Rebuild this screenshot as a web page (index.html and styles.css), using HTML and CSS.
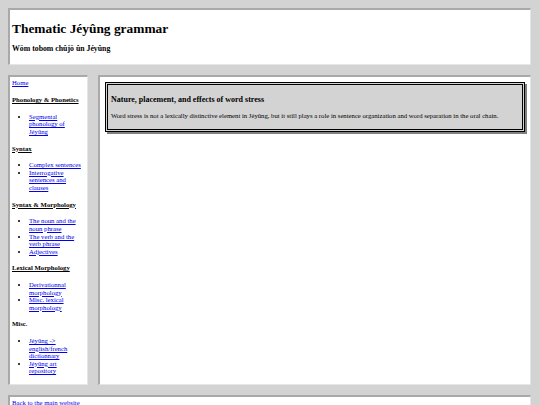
FILE: index.html
```html
<!DOCTYPE html>
<html>
<head>
<meta charset="utf-8">
<title>Thematic Jéyûng grammar</title>
<link rel="stylesheet" href="styles.css">
</head>
<body>
<div class="header panel">
  <h1 class="title">Thematic Jéyûng grammar</h1>
  <h4 class="subtitle">Wöm tobom chûjö ûn Jéyûng</h4>
</div>
<div class="row">
  <div class="sidebar panel">
    <p class="nav-home"><a href="#">Home</a></p>
    <h4 class="nav-head u">Phonology &amp; Phonetics</h4>
    <ul class="nav-list">
      <li><a href="#">Segmental phonology of Jéyûng</a></li>
    </ul>
    <h4 class="nav-head u">Syntax</h4>
    <ul class="nav-list">
      <li><a href="#">Complex sentences</a></li>
      <li><a href="#">Interrogative sentences and clauses</a></li>
    </ul>
    <h4 class="nav-head u">Syntax &amp; Morphology</h4>
    <ul class="nav-list">
      <li><a href="#">The noun and the noun phrase</a></li>
      <li><a href="#">The verb and the verb phrase</a></li>
      <li><a href="#">Adjectives</a></li>
    </ul>
    <h4 class="nav-head u">Lexical Morphology</h4>
    <ul class="nav-list">
      <li><a href="#">Derivationnal morphology</a></li>
      <li><a href="#">Misc. lexical morphology</a></li>
    </ul>
    <h4 class="nav-head">Misc.</h4>
    <ul class="nav-list">
      <li><a href="#">Jéyûng -&gt; english/french dictionnary</a></li>
      <li><a href="#">Jéyûng art repository</a></li>
    </ul>
  </div>
  <div class="main panel">
    <div class="article">
      <h3 class="article-title">Nature, placement, and effects of word stress</h3>
      <p class="article-text">Word stress is not a lexically distinctive element in Jéyûng, but it still plays a role in sentence organization and word separation in the oral chain.</p>
    </div>
  </div>
</div>
<div class="footer panel">
  <a href="#">Back to the main website</a>
</div>
</body>
</html>
```
FILE: styles.css
```css
html, body {
  background: #d3d3d3;
}
body {
  margin: 8px 9px 0 8px;
  font-family: "Liberation Serif", "Times New Roman", serif;
  font-size: 6.7px;
  line-height: 1.15;
  color: #000;
}
a {
  color: #0000ee;
  text-decoration: underline;
}
.panel {
  background: #fff;
  border-style: solid;
  border-width: 2px 1px 1px 2px;
  border-color: #a9a9a9 #e6e6e6 #e6e6e6 #a9a9a9;
  padding: 2px;
}
.title {
  font-size: 13.4px;
  font-weight: bold;
  margin: 9px 0;
  line-height: 1.15;
}
.subtitle {
  font-size: 7.8px;
  font-weight: bold;
  margin: 8px 0;
}
.row {
  display: flex;
  gap: 10px;
  margin-top: 10px;
}
.sidebar {
  width: 73px;
  flex: none;
}
.nav-home {
  margin: 0;
}
.nav-head {
  font-size: 6.7px;
  font-weight: bold;
  margin: 9px 0;
}
.nav-head.u {
  text-decoration: underline;
}
.nav-list {
  margin: 6.7px 0;
  padding-left: 17px;
  list-style: disc;
}
.nav-list li {
  line-height: 7.6px;
}
.main {
  flex: 1;
  min-width: 0;
  padding: 5px;
}
.article {
  background: #d3d3d3;
  border: 3px double #000;
  box-shadow: 2px 2px 0 #808080;
  padding: 1.5px 3px;
}
.article-title {
  font-size: 8px;
  font-weight: bold;
  margin: 8.6px 0 7.2px;
  line-height: 9.4px;
}
.article-text {
  font-size: 6.7px;
  line-height: 8px;
  margin: 7px 0 7.5px;
  white-space: nowrap;
}
.footer {
  margin-top: 10px;
  padding-bottom: 10px;
}
```
